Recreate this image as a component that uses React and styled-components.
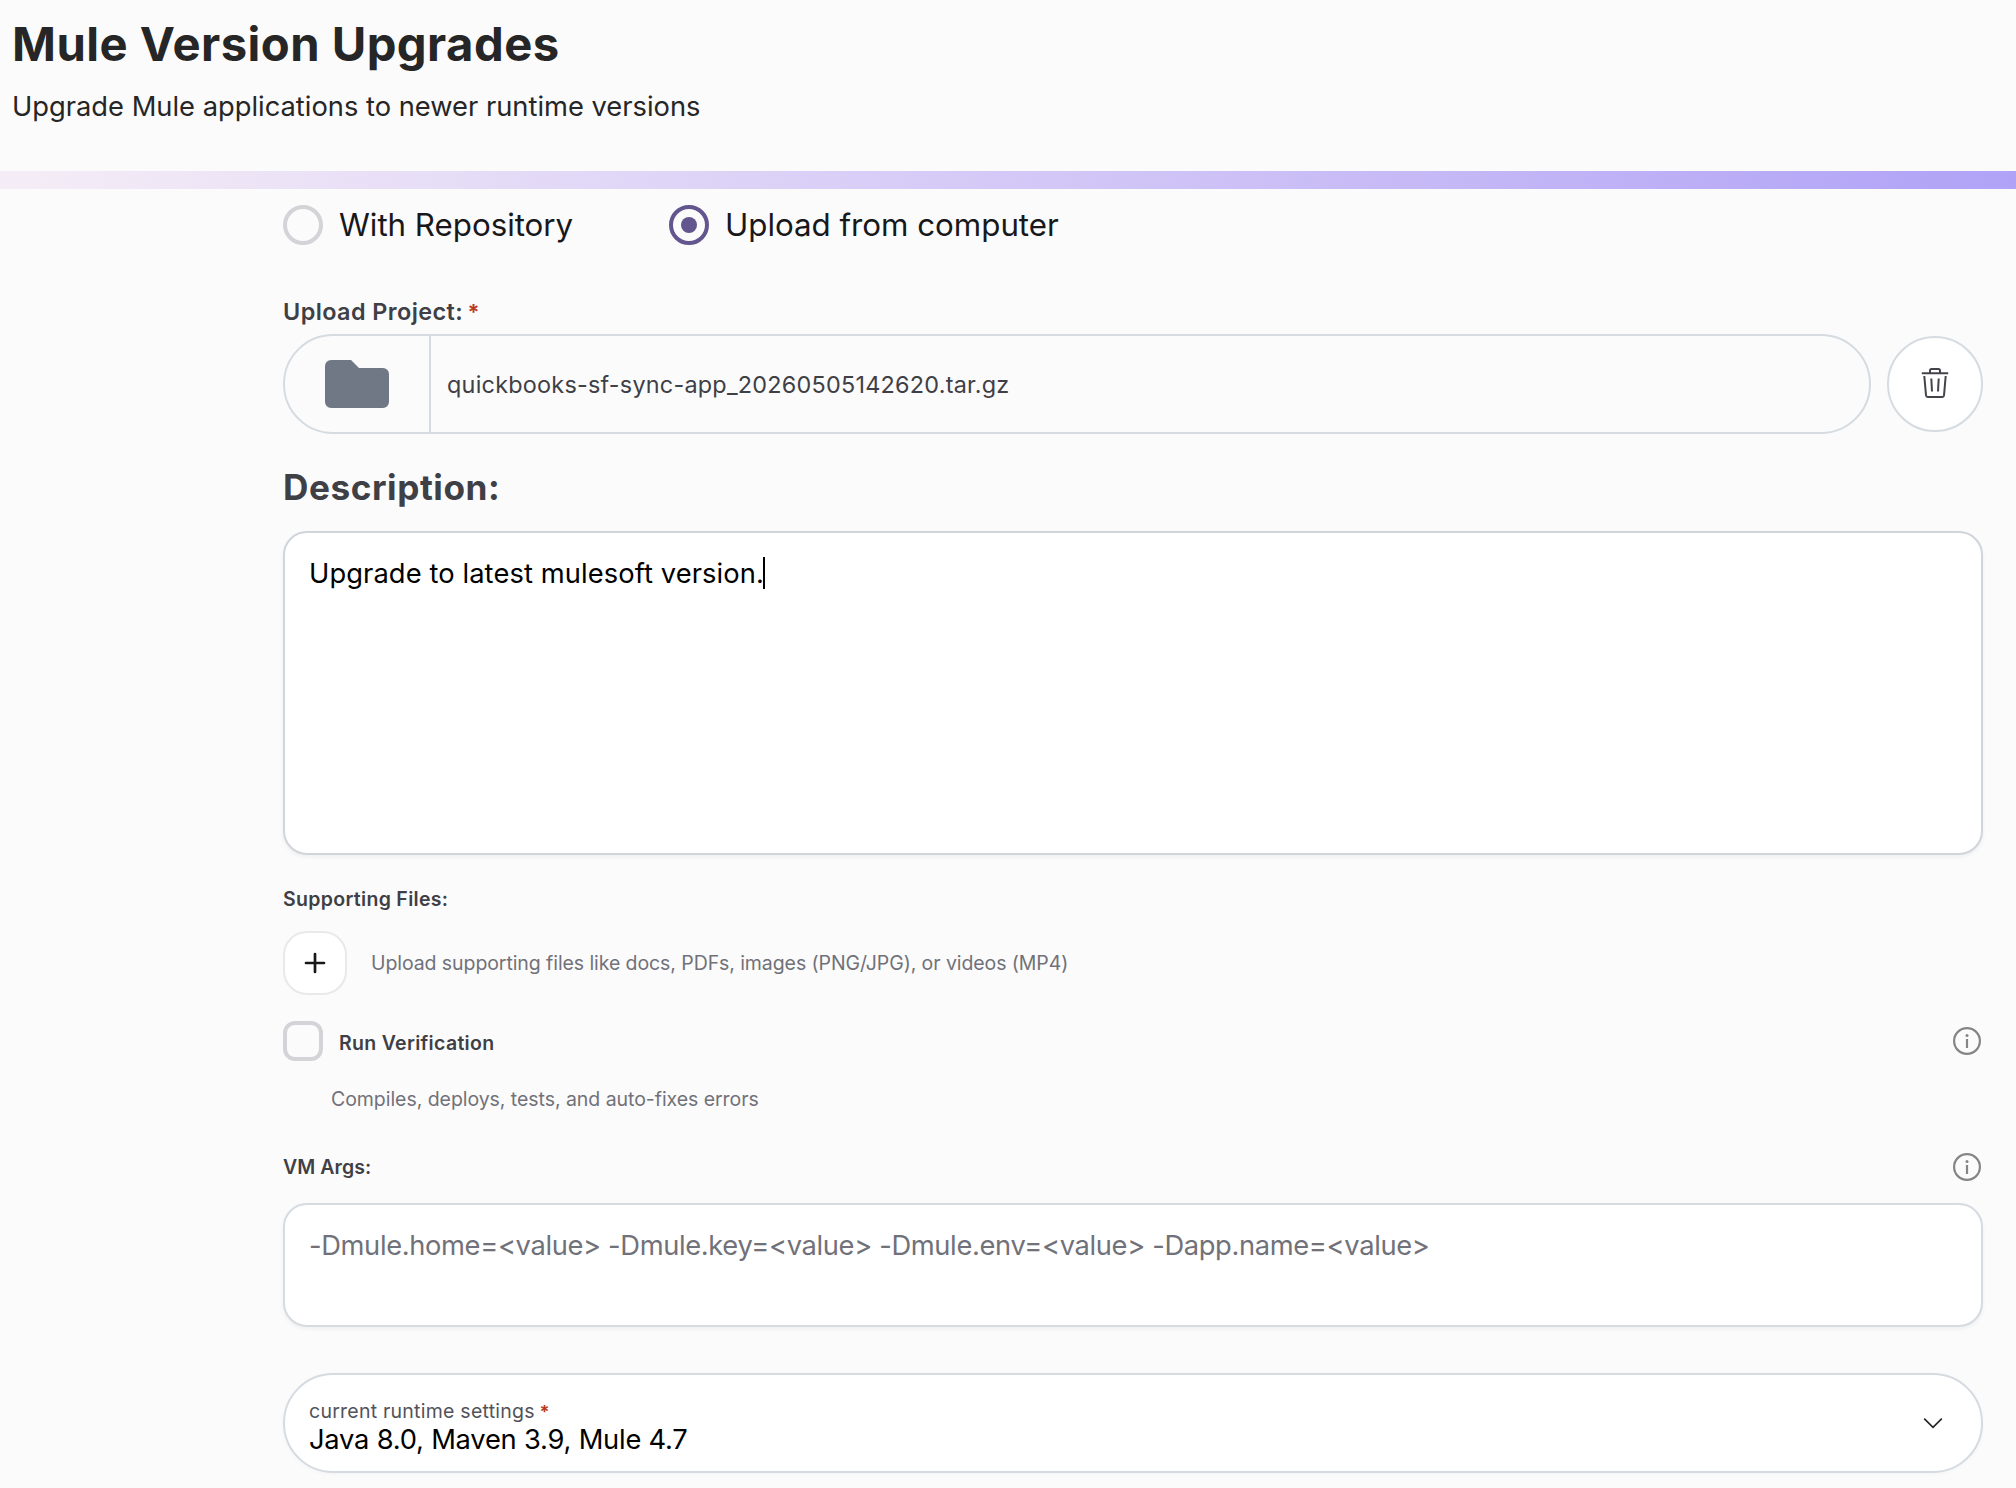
import React, { useState } from "react";
import styled, { createGlobalStyle } from "styled-components";

const GlobalStyle = createGlobalStyle`
  * {
    box-sizing: border-box;
  }

  body {
    margin: 0;
    background: #fbfbfb;
    font-family: Inter, "Liberation Sans", sans-serif;
    color: #262626;
  }
`;

const Page = styled.div`
  width: 2016px;
  height: 1488px;
  overflow: hidden;
`;

const Header = styled.header`
  height: 171px;
  padding: 16px 12px 0;
`;

const Title = styled.h1`
  margin: 0;
  font-size: 47.2px;
  line-height: 56px;
  font-weight: 700;
  letter-spacing: 0.45px;
`;

const Subtitle = styled.p`
  margin: 15px 0 0;
  font-size: 27.3px;
  line-height: 40px;
`;

const GradientBar = styled.div`
  height: 18px;
  background: linear-gradient(90deg, #f5edf6 0%, #dfd5f7 33%, #cbbff6 63%, #b0a2f6 100%);
`;

const Form = styled.main`
  display: flex;
  flex-direction: column;
  width: 1700px;
  margin: 16px 0 0 283px;
`;

const RadioGroup = styled.div`
  display: flex;
`;

const RadioOption = styled.label`
  display: flex;
  align-items: center;
  gap: 16px;
  min-width: 386px;
  height: 40px;
  font-size: 31.3px;
  letter-spacing: -0.02px;
  color: #18181b;
  white-space: nowrap;
`;

const RadioCircle = styled.span`
  display: flex;
  align-items: center;
  justify-content: center;
  width: 40px;
  height: 40px;
  border: 4px solid ${props => (props.$checked ? "#63568f" : "#d4d4d8")};
  border-radius: 50%;

  &::after {
    content: "";
    width: 16px;
    height: 16px;
    border-radius: 50%;
    background: ${props => (props.$checked ? "#63568f" : "transparent")};
  }
`;

const Required = styled.span`
  margin-left: ${props => props.$shift || 0}px;
  font-size: 0.92em;
  font-weight: 700;
  line-height: 1;
  color: #ba3a24;
`;

const UploadLabel = styled.div`
  margin-top: 49px;
  font-size: 23.4px;
  line-height: 35px;
  font-weight: 600;
  letter-spacing: 0.43px;
  color: #3f3f46;
`;

const UploadRow = styled.div`
  display: flex;
  align-items: center;
  gap: 16px;
  margin-top: 5px;
`;

const FileField = styled.div`
  display: flex;
  flex: 1;
  height: 100px;
  border: 2px solid #d5dbe1;
  border-radius: 50px;
  overflow: hidden;
`;

const FolderCell = styled.div`
  display: flex;
  align-items: center;
  justify-content: center;
  width: 146px;
  border-right: 2px solid #d5dbe1;
`;

const FileName = styled.div`
  padding-left: 16px;
  font-size: 23.4px;
  line-height: 98px;
  letter-spacing: 0.24px;
  color: #3f3f46;
`;

const DeleteButton = styled.button`
  display: flex;
  align-items: center;
  justify-content: center;
  width: 96px;
  height: 96px;
  padding: 0 0 2px;
  border: 2px solid #d5dbe1;
  border-radius: 50%;
  background: #fff;
`;

const DescriptionLabel = styled.h2`
  margin: 31px 0 22px;
  font-size: 35.2px;
  line-height: 44px;
  font-weight: 700;
  letter-spacing: 0.55px;
  color: #3f3f46;
`;

const TextBox = styled.div`
  height: ${props => props.$height}px;
  padding: 21px 24px 0;
  border: 2px solid ${props => props.$border || "#d5dbe1"};
  border-radius: 24px;
  background: #fff;
  box-shadow: 0 2px 4px rgba(0, 0, 0, 0.05);
  font-size: 27.3px;
  line-height: 40px;
  letter-spacing: ${props => props.$spacing}px;
  color: ${props => (props.$placeholder ? "#71717a" : "#000")};
  white-space: nowrap;
`;

const Caret = styled.span`
  display: inline-block;
  width: 2px;
  height: 32px;
  margin-left: -1px;
  vertical-align: -6px;
  background: #000;
`;

const FieldLabel = styled.div`
  font-size: 19.5px;
  line-height: 28px;
  font-weight: 600;
  letter-spacing: ${props => (props.$tight ? 0.08 : 0.31)}px;
  color: #3f3f46;
`;

const SupportLabel = styled(FieldLabel)`
  margin: 30px 0 18px;
`;

const SupportRow = styled.div`
  display: flex;
  align-items: center;
  gap: 24px;
`;

const AddButton = styled.button`
  display: flex;
  align-items: center;
  justify-content: center;
  width: 64px;
  height: 64px;
  padding: 0;
  border: 2px solid #e9e9ea;
  border-radius: 24px;
  background: #fff;
`;

const Hint = styled.div`
  font-size: 19.5px;
  line-height: 28px;
  letter-spacing: -0.08px;
  color: #71717a;
`;

const VerifyRow = styled.div`
  display: flex;
  align-items: center;
  gap: 16px;
  height: 40px;
  margin-top: 26px;
  padding-right: 2px;

  ${FieldLabel} {
    flex: 1;
    padding-top: 4px;
  }
`;

const Checkbox = styled.span`
  width: 40px;
  height: 40px;
  border: 4px solid #d4d4d8;
  border-radius: 12px;
`;

const VerifyHint = styled(Hint)`
  margin: 24px 0 0 48px;
  letter-spacing: -0.05px;
`;

const ArgsHeader = styled.div`
  display: flex;
  align-items: center;
  justify-content: space-between;
  height: 28px;
  margin: 40px 0 22px;
  padding-right: 2px;
`;

const RuntimeSelect = styled.div`
  display: flex;
  align-items: center;
  justify-content: space-between;
  height: 100px;
  margin-top: 46px;
  padding: 0 38px 0 24px;
  border: 2px solid #d5dbe1;
  border-radius: 50px;
  background: #fff;
  box-shadow: 0 1px 4px rgba(0, 0, 0, 0.03);
`;

const SelectText = styled.div`
  padding-top: 9px;
`;

const SelectLabel = styled.div`
  font-size: 19.5px;
  line-height: 24px;
  letter-spacing: 0.24px;
  color: #52525b;
`;

const SelectValue = styled.div`
  padding-top: 1px;
  font-size: 27.3px;
  line-height: 32px;
  letter-spacing: -0.21px;
  color: #000;
`;

const FolderIcon = () => (
  <svg width="64" height="48" viewBox="0 0 64 48" fill="#717885">
    <path d="M6 0h20l8 8h24a6 6 0 0 1 6 6v28a6 6 0 0 1-6 6H6a6 6 0 0 1-6-6V6a6 6 0 0 1 6-6Z" />
  </svg>
);

const TrashIcon = () => (
  <svg width="28" height="32" viewBox="0 0 28 32" fill="none" stroke="#45424b" strokeWidth="2">
    <path d="M.8 6.2h26.4M9 6V3.600A1.600 1.600 0 0 1 10.600 2h6.800A1.600 1.600 0 0 1 19 3.600V6" />
    <path d="M3.300 9l1.700 19.400A1.800 1.800 0 0 0 6.800 30h14.400a1.800 1.800 0 0 0 1.800-1.600L24.700 9M10.300 11.500l.7 13M17.700 11.500l-.7 13" />
  </svg>
);

const PlusIcon = () => (
  <svg width="22" height="22" viewBox="0 0 22 22" fill="none" stroke="#18181b" strokeWidth="2.700" strokeLinecap="round">
    <path d="M11 2v18M2 11h18" />
  </svg>
);

const InfoIcon = () => (
  <svg width="28" height="28" viewBox="0 0 28 28" fill="none" stroke="#858585" strokeWidth="2.200">
    <circle cx="14" cy="14" r="12.900" />
    <path d="M14 12v9" />
    <circle cx="14" cy="8.500" r="1.500" fill="#858585" stroke="none" />
  </svg>
);

const ChevronIcon = () => (
  <svg width="20" height="12" viewBox="0 0 20 12" fill="none" stroke="#262626" strokeWidth="1.700">
    <path d="M1.200 1.700L10 10.300l8.800-8.600" />
  </svg>
);

const sources = ["With Repository", "Upload from computer"];

function App() {
  const [source, setSource] = useState(sources[1]);

  return (
    <Page>
      <GlobalStyle />
      <Header>
        <Title>Mule Version Upgrades</Title>
        <Subtitle>Upgrade Mule applications to newer runtime versions</Subtitle>
      </Header>
      <GradientBar />
      <Form>
        <RadioGroup>
          {sources.map(item => (
            <RadioOption key={item} onClick={() => setSource(item)}>
              <RadioCircle $checked={item === source} />
              {item}
            </RadioOption>
          ))}
        </RadioGroup>

        <UploadLabel>
          Upload Project: <Required $shift={-2}>*</Required>
        </UploadLabel>
        <UploadRow>
          <FileField>
            <FolderCell>
              <FolderIcon />
            </FolderCell>
            <FileName>quickbooks-sf-sync-app_20260505142620.tar.gz</FileName>
          </FileField>
          <DeleteButton>
            <TrashIcon />
          </DeleteButton>
        </UploadRow>

        <DescriptionLabel>Description:</DescriptionLabel>
        <TextBox $height={324} $border="#d0d4db" $spacing={0.1}>
          Upgrade to latest mulesoft version.
          <Caret />
        </TextBox>

        <SupportLabel>Supporting Files:</SupportLabel>
        <SupportRow>
          <AddButton>
            <PlusIcon />
          </AddButton>
          <Hint>Upload supporting files like docs, PDFs, images (PNG/JPG), or videos (MP4)</Hint>
        </SupportRow>

        <VerifyRow>
          <Checkbox />
          <FieldLabel>Run Verification</FieldLabel>
          <InfoIcon />
        </VerifyRow>
        <VerifyHint>Compiles, deploys, tests, and auto-fixes errors</VerifyHint>

        <ArgsHeader>
          <FieldLabel $tight>VM Args:</FieldLabel>
          <InfoIcon />
        </ArgsHeader>
        <TextBox $height={124} $spacing={-0.35} $placeholder>
          {"-Dmule.home=<value> -Dmule.key=<value> -Dmule.env=<value> -Dapp.name=<value>"}
        </TextBox>

        <RuntimeSelect>
          <SelectText>
            <SelectLabel>
              current runtime settings <Required $shift={-1}>*</Required>
            </SelectLabel>
            <SelectValue>Java 8.0, Maven 3.9, Mule 4.7</SelectValue>
          </SelectText>
          <ChevronIcon />
        </RuntimeSelect>
      </Form>
    </Page>
  );
}

export default App;
